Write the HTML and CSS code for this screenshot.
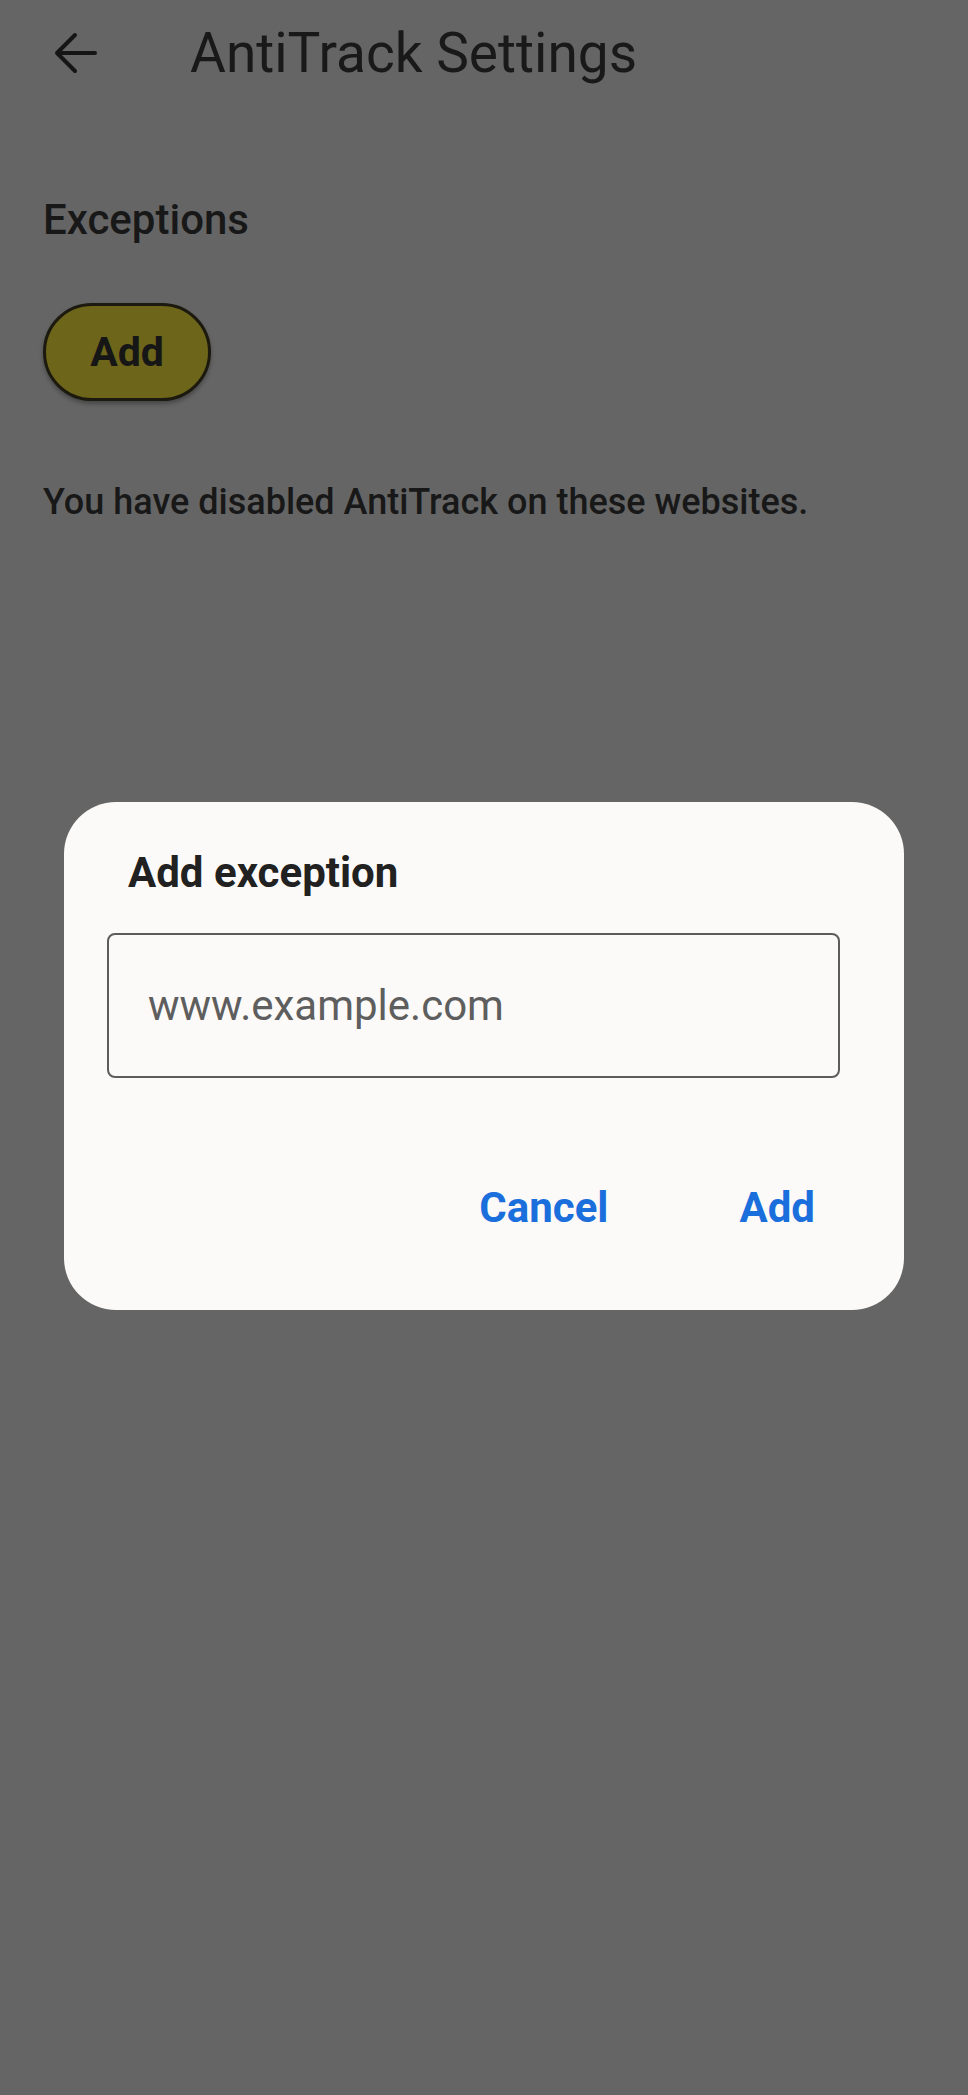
FILE: index.html
```html
<!DOCTYPE html>
<html lang="en">
<head>
  <meta charset="UTF-8">
  <meta name="viewport" content="width=device-width, initial-scale=1.0">
  <title>AntiTrack Settings</title>
  <link rel="stylesheet" href="styles.css">
</head>
<body>
  <div class="screen">
    <header class="toolbar">
      <span class="back">
        <svg width="44" height="42" viewBox="0 0 44 42">
          <path d="M42 21H4M22 3L4 21l18 18" fill="none" stroke="#151515" stroke-width="4" stroke-linecap="round" stroke-linejoin="round"/>
        </svg>
      </span>
      <h1>AntiTrack Settings</h1>
    </header>

    <main class="content">
      <h2>Exceptions</h2>
      <button class="add-btn">Add</button>
      <p class="note">You have disabled AntiTrack on these websites.</p>
    </main>
  </div>

  <div class="overlay">
    <div class="dialog">
      <h3>Add exception</h3>
      <div class="field">
        <input type="text" placeholder="www.example.com">
      </div>
      <div class="actions">
        <button class="text-btn">Cancel</button>
        <button class="text-btn">Add</button>
      </div>
    </div>
  </div>
</body>
</html>
```

FILE: styles.css
```css
body {
  margin: 0;
  padding: 0;
  font-family: Roboto, "Noto Sans", sans-serif;
  background-color: #656565;
  color: #181818;
  min-height: 2095px;
}

.screen {
  width: 968px;
}

.toolbar {
  display: flex;
  align-items: center;
  height: 106px;
  padding-left: 53px;
  box-sizing: border-box;
}

.back {
  display: flex;
  width: 44px;
  height: 42px;
  margin-right: 93px;
}

h1 {
  margin: 0;
  font-size: 55px;
  font-weight: 400;
  color: #191919;
}

.content {
  padding: 0 43px;
}

h2 {
  margin: 90px 0 0;
  font-size: 42px;
  font-weight: 500;
  line-height: 48px;
}

.add-btn {
  display: block;
  margin-top: 59px;
  width: 168px;
  height: 98px;
  border: 3px solid #1c1a0e;
  border-radius: 49px;
  background-color: #6d651a;
  color: #161616;
  font-family: inherit;
  font-size: 41px;
  font-weight: 700;
  box-shadow: 0 3px 4px rgba(0, 0, 0, 0.3);
}

.note {
  margin: 79px 0 0;
  font-size: 36px;
  font-weight: 500;
  line-height: 44px;
}

.overlay {
  position: fixed;
  inset: 0;
  display: flex;
  justify-content: center;
  align-items: flex-start;
  padding-top: 802px;
  box-sizing: border-box;
}

.dialog {
  width: 840px;
  height: 508px;
  background-color: #fbfaf8;
  border-radius: 52px;
  padding: 41px 64px 0 43px;
  box-sizing: border-box;
}

h3 {
  margin: 0 0 0 21px;
  font-size: 42px;
  font-weight: 700;
  line-height: 60px;
  color: #212121;
}

.field {
  margin-top: 30px;
}

.field input {
  display: block;
  width: 100%;
  height: 145px;
  box-sizing: border-box;
  border: 2px solid #5c5c5c;
  border-radius: 8px;
  background: transparent;
  padding: 0 0 0 39px;
  font-family: inherit;
  font-size: 42px;
  color: #222;
  outline: none;
}

.field input::placeholder {
  color: #5e5e5e;
}

.actions {
  display: flex;
  justify-content: flex-end;
  gap: 131px;
  margin-top: 105px;
  padding-right: 25px;
}

.text-btn {
  border: none;
  background: none;
  padding: 0;
  font-family: inherit;
  font-size: 42px;
  font-weight: 700;
  color: #1a6fdc;
}
```
